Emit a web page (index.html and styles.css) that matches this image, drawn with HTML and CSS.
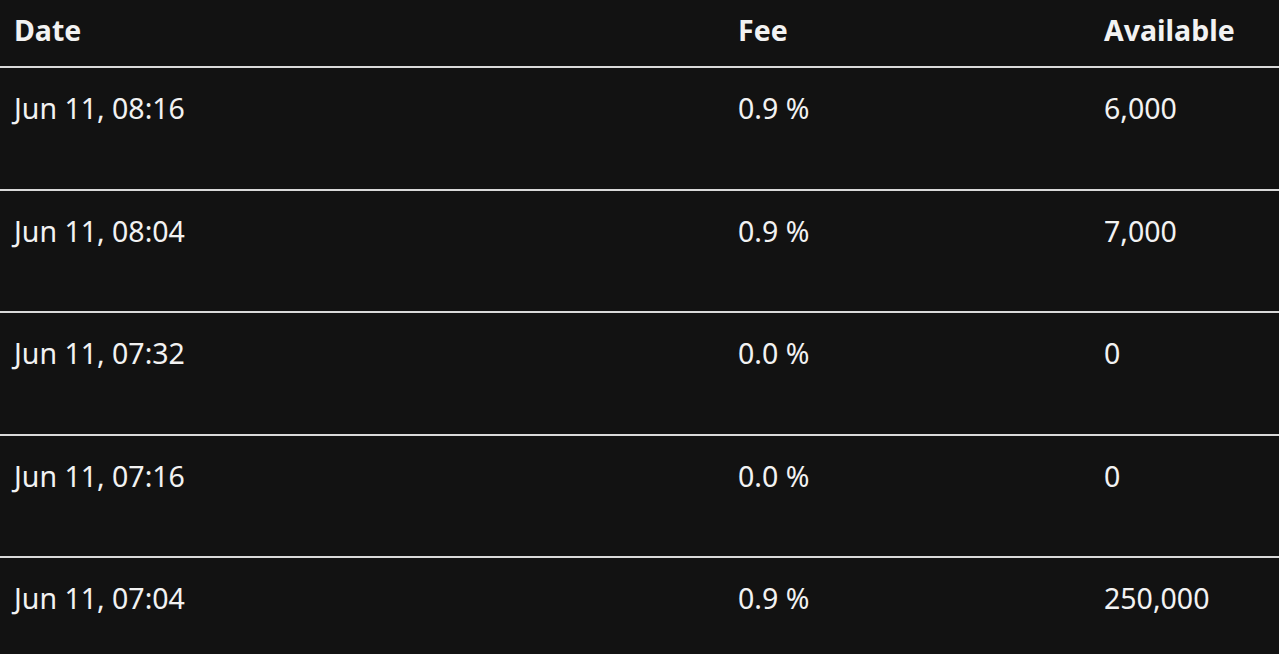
FILE: index.html
```html
<!DOCTYPE html>
<html>
<head>
<meta charset="utf-8">
<link rel="stylesheet" href="styles.css">
</head>
<body>
<table class="trades">
  <thead>
    <tr><th class="c-date">Date</th><th class="c-fee">Fee</th><th class="c-avail">Available</th></tr>
  </thead>
  <tbody>
    <tr><td>Jun 11, 08:16</td><td>0.9 %</td><td>6,000</td></tr>
    <tr><td>Jun 11, 08:04</td><td>0.9 %</td><td>7,000</td></tr>
    <tr><td>Jun 11, 07:32</td><td>0.0 %</td><td>0</td></tr>
    <tr><td>Jun 11, 07:16</td><td>0.0 %</td><td>0</td></tr>
    <tr><td>Jun 11, 07:04</td><td>0.9 %</td><td>250,000</td></tr>
  </tbody>
</table>
</body>
</html>
```
FILE: styles.css
```css
html, body {
  margin: 0;
  padding: 0;
  background: #121212;
  color: #f2f2f2;
  font-family: "Noto Sans", "Open Sans", sans-serif;
  overflow: hidden;
}
.trades {
  width: 100%;
  border-collapse: collapse;
  table-layout: fixed;
}
.c-date { width: 724px; }
.c-fee { width: 366px; }
.trades th {
  text-align: left;
  font-weight: 700;
  font-size: 28.5px;
  line-height: 40px;
  height: 67px;
  padding: 0 14px 6px;
  box-sizing: border-box;
  vertical-align: middle;
  border-bottom: 2px solid #d9d9d9;
}
.trades td {
  font-size: 28.5px;
  line-height: 40px;
  height: 122.5px;
  padding: 20px 14px 0;
  box-sizing: border-box;
  vertical-align: top;
  border-bottom: 2px solid #d9d9d9;
}
```
